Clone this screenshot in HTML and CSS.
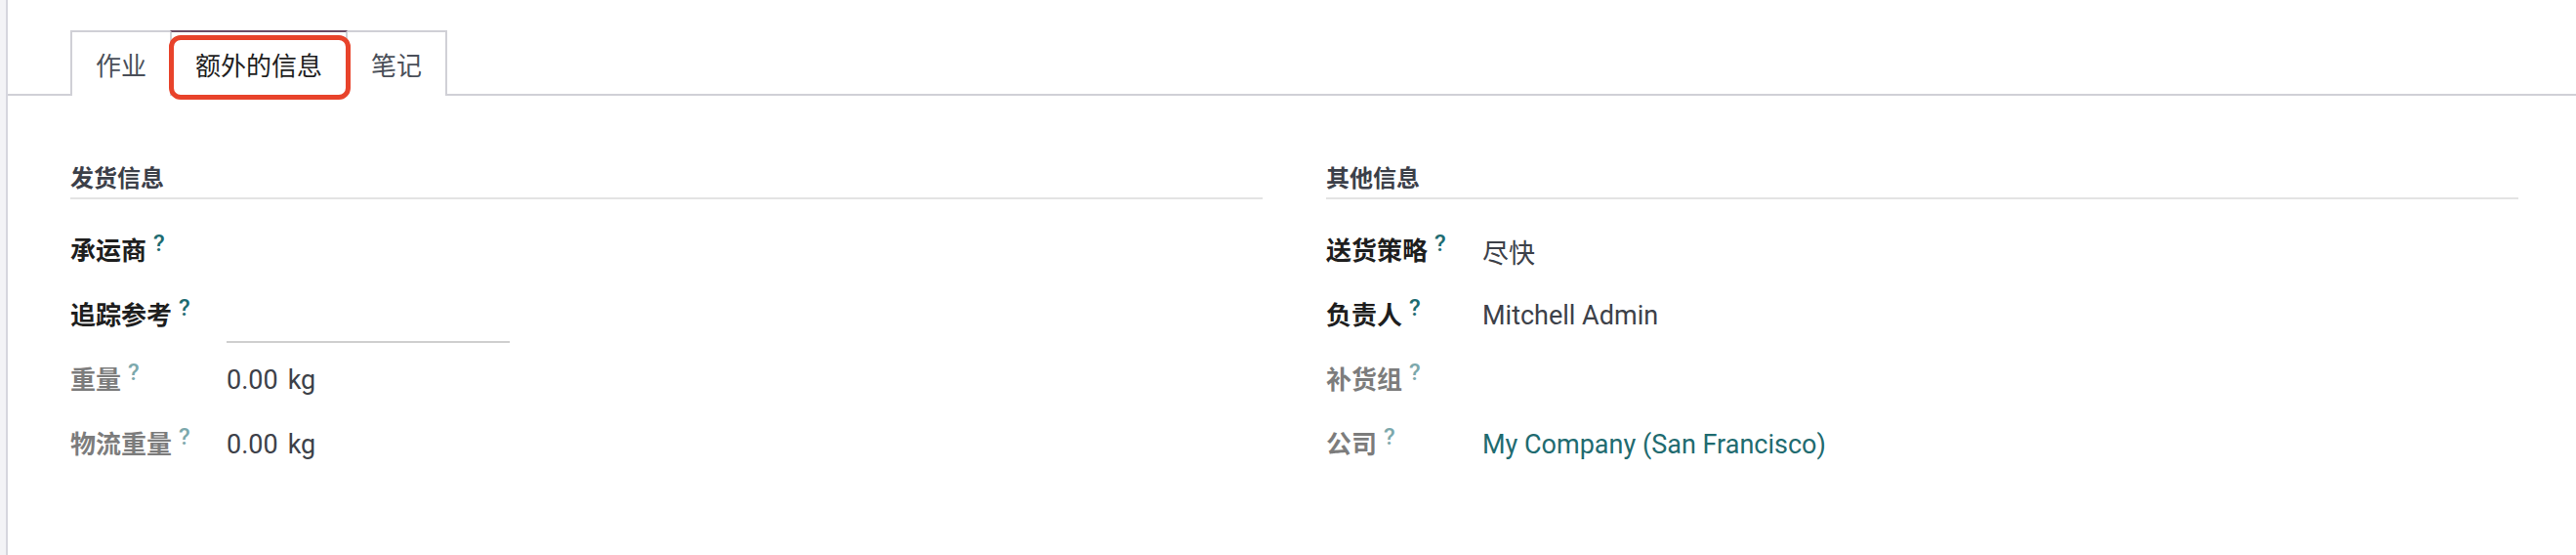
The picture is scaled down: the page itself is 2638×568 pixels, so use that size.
FILE: index.html
```html
<!DOCTYPE html>
<html lang="zh-CN">
<head>
<meta charset="utf-8">
<title>额外的信息</title>
<link rel="stylesheet" href="styles.css">
</head>
<body>
<div class="sheet">
  <div class="tabs">
    <div class="tab">作业</div>
    <div class="tab active">额外的信息<span class="annot"></span></div>
    <div class="tab">笔记</div>
  </div>
  <div class="content">
    <div class="group">
      <div class="sep">发货信息</div>
      <div class="rows">
        <div class="label"><span class="ltext">承运商</span><sup class="help">?</sup></div>
        <div class="value"></div>
        <div class="label"><span class="ltext">追踪参考</span><sup class="help">?</sup></div>
        <div class="value"><span class="input"></span></div>
        <div class="label ro"><span class="ltext">重量</span><sup class="help">?</sup></div>
        <div class="value"><span>0.00</span><span class="unit">kg</span></div>
        <div class="label ro"><span class="ltext">物流重量</span><sup class="help">?</sup></div>
        <div class="value"><span>0.00</span><span class="unit">kg</span></div>
      </div>
    </div>
    <div class="group">
      <div class="sep">其他信息</div>
      <div class="rows">
        <div class="label"><span class="ltext">送货策略</span><sup class="help">?</sup></div>
        <div class="value">尽快</div>
        <div class="label"><span class="ltext">负责人</span><sup class="help">?</sup></div>
        <div class="value">Mitchell Admin</div>
        <div class="label ro"><span class="ltext">补货组</span><sup class="help">?</sup></div>
        <div class="value"></div>
        <div class="label ro"><span class="ltext">公司</span><sup class="help">?</sup></div>
        <div class="value"><span class="link">My Company (San Francisco)</span></div>
      </div>
    </div>
  </div>
</div>
</body>
</html>
```

FILE: styles.css
```css
html, body {
  margin: 0;
  padding: 0;
}
body {
  background: #f3f3f6;
  padding-left: 6px;
  font-family: Roboto, "Noto Sans CJK SC", "Noto Sans", sans-serif;
  color: #3d4149;
}
.sheet {
  background: #ffffff;
  border-left: 2px solid #d6d6de;
  min-height: 568px;
  box-sizing: border-box;
}
.tabs {
  display: flex;
  padding: 31px 0 0 64px;
  border-bottom: 2px solid #d0d0d6;
}
.tab {
  position: relative;
  height: 67px;
  margin-bottom: -2px;
  box-sizing: border-box;
  border: 2px solid #d0d0d6;
  border-bottom: none;
  background: #ffffff;
  padding: 0 24px;
  display: flex;
  align-items: center;
  font-size: 26px;
  color: #4a4f59;
}
.tab + .tab {
  margin-left: -2px;
}
.tab.active {
  color: #1e1e1e;
  border-top-color: #6c4d66;
  z-index: 1;
}
.annot {
  position: absolute;
  left: -3px;
  top: 3px;
  width: 186px;
  height: 66px;
  box-sizing: border-box;
  border: 5px solid #e8432b;
  border-radius: 12px;
}
.content {
  display: grid;
  grid-template-columns: 1fr 1fr;
  column-gap: 65px;
  padding: 69px 59px 0 64px;
}
.sep {
  font-size: 24px;
  line-height: 32px;
  font-weight: 700;
  color: #3c4049;
  padding-bottom: 3px;
  border-bottom: 2px solid #e3e3e3;
}
.rows {
  display: grid;
  grid-template-columns: 160px 1fr;
  grid-auto-rows: 66px;
  margin-top: 20px;
}
.label {
  display: flex;
  align-items: center;
  font-size: 26px;
  font-weight: 600;
  color: #1e1e1e;
}
.ltext {
  line-height: 34px;
}
.help {
  align-self: flex-start;
  margin-top: 13px;
  margin-left: 7px;
  font-size: 24px;
  line-height: 24px;
  font-weight: 500;
  color: #1d6b71;
}
.label.ro {
  opacity: 0.58;
}
.value {
  display: flex;
  align-items: center;
  font-size: 27px;
  color: #3d4149;
}
.unit {
  margin-left: 10px;
}
.input {
  display: block;
  width: 290px;
  height: 50px;
  box-sizing: border-box;
  border-bottom: 2px solid #cfcfcf;
  margin-top: 6px;
}
.link {
  color: #1f6b70;
}
```
